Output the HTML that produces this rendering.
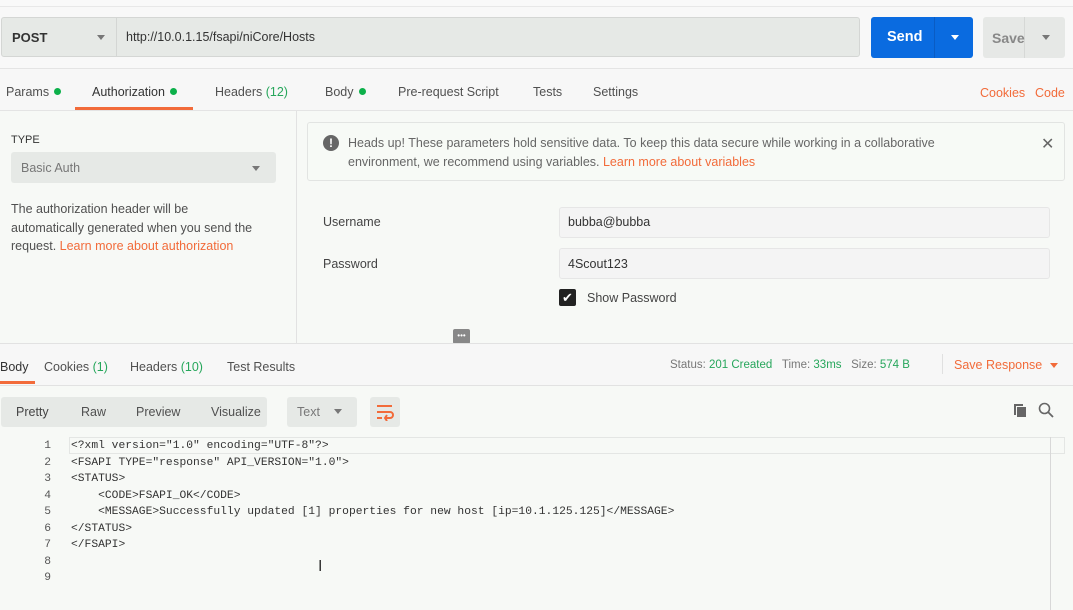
<!DOCTYPE html>
<html><head><style>
*{margin:0;padding:0;box-sizing:border-box}
body{width:1073px;height:610px;overflow:hidden;background:#f7f9f6;font-family:"Liberation Sans",sans-serif;font-size:12.5px;color:#505050;position:relative}
.a{position:absolute;white-space:nowrap}
.g{color:#26a65b}.o{color:#f26b3a}
.dot{display:inline-block;width:7px;height:7px;border-radius:50%;background:#0cb04a;margin-left:5px;vertical-align:1px}
.tri{display:block;width:0;height:0;border-left:4px solid transparent;border-right:4px solid transparent;border-top:5px solid #777}
.code{font-family:"Liberation Mono",monospace;font-size:11.3px;color:#333}
</style></head><body>
<div class="a" style="left:0;top:0;width:1073px;height:69px;background:#f8f8f8;border-top:6px solid #f9f9f9"></div>
<div class="a" style="left:0;top:6px;width:1073px;height:1px;background:#e8e8e8"></div>
<div class="a" style="left:1px;top:17px;width:859px;height:40px;background:#e6e9e6;border:1px solid #d4d6d4;border-radius:3px"></div>
<div class="a" style="left:116px;top:18px;width:1px;height:38px;background:#d4d6d4"></div>
<div class="a" style="left:12px;top:30px;font-weight:bold;color:#333;font-size:13px">POST</div>
<div class="a tri" style="left:97px;top:35px"></div>
<div class="a" style="left:126px;top:30px;color:#333;font-size:12.5px">http://10.0.1.15/fsapi/niCore/Hosts</div>
<div class="a" style="left:871px;top:17px;width:102px;height:41px;background:#0a6be0;border-radius:3px"></div>
<div class="a" style="left:934px;top:17px;width:1px;height:41px;background:#0a5cc4"></div>
<div class="a" style="left:887px;top:29px;color:#fff;font-weight:bold;font-size:14.5px">Send</div>
<div class="a tri" style="left:951px;top:35px;border-top-color:#fff"></div>
<div class="a" style="left:983px;top:17px;width:82px;height:41px;background:#e6e8e6;border-radius:3px"></div>
<div class="a" style="left:1024px;top:17px;width:1px;height:41px;background:#d6d8d6"></div>
<div class="a" style="left:992px;top:30px;color:#888;font-weight:bold;font-size:14px">Save</div>
<div class="a tri" style="left:1042px;top:35px"></div>
<div class="a" style="left:0;top:68px;width:1073px;height:1px;background:#e4e4e4"></div>
<div class="a" style="left:0;top:69px;width:1073px;height:41px;background:#f7f7f7"></div>
<div class="a" style="left:6px;top:85px">Params<span class="dot"></span></div>
<div class="a" style="left:92px;top:85px;color:#333">Authorization<span class="dot"></span></div>
<div class="a" style="left:215px;top:85px">Headers <span class="g">(12)</span></div>
<div class="a" style="left:325px;top:85px">Body<span class="dot"></span></div>
<div class="a" style="left:398px;top:85px">Pre-request Script</div>
<div class="a" style="left:533px;top:85px">Tests</div>
<div class="a" style="left:593px;top:85px">Settings</div>
<div class="a o" style="left:980px;top:86px">Cookies</div>
<div class="a o" style="left:1035px;top:86px">Code</div>
<div class="a" style="left:75px;top:107px;width:118px;height:3px;background:#f26b3a"></div>
<div class="a" style="left:0;top:110px;width:1073px;height:1px;background:#e4e4e4"></div>
<div class="a" style="left:296px;top:111px;width:1px;height:232px;background:#e2e2e2"></div>
<div class="a" style="left:11px;top:134px;font-size:11px;color:#333">TYPE</div>
<div class="a" style="left:11px;top:152px;width:265px;height:31px;background:#e6e9e6;border-radius:3px"></div>
<div class="a" style="left:21px;top:161px;color:#777">Basic Auth</div>
<div class="a tri" style="left:252px;top:166px"></div>
<div class="a" style="left:11px;top:200px;line-height:18.5px">The authorization header will be<br>automatically generated when you send the<br>request. <span class="o">Learn more about authorization</span></div>
<div class="a" style="left:307px;top:122px;width:758px;height:59px;border:1px solid #e2e4e2;border-radius:3px;background:#f7faf6"></div>
<div class="a" style="left:323px;top:135px;width:16px;height:16px;border-radius:50%;background:#666;color:#fff;font-weight:bold;font-size:12px;text-align:center;line-height:16px">!</div>
<div class="a" style="left:348px;top:134px;line-height:18.5px;color:#666">Heads up! These parameters hold sensitive data. To keep this data secure while working in a collaborative<br>environment, we recommend using variables. <span class="o">Learn more about variables</span></div>
<div class="a" style="left:1041px;top:134px;font-size:16px;color:#666">✕</div>
<div class="a" style="left:323px;top:215px;color:#444">Username</div>
<div class="a" style="left:323px;top:257px;color:#444">Password</div>
<div class="a" style="left:559px;top:207px;width:491px;height:31px;background:#f4f4f4;border:1px solid #e6e6e6;border-radius:3px"></div>
<div class="a" style="left:559px;top:248px;width:491px;height:31px;background:#f4f4f4;border:1px solid #e6e6e6;border-radius:3px"></div>
<div class="a" style="left:568px;top:215px;color:#333">bubba@bubba</div>
<div class="a" style="left:568px;top:257px;color:#333">4Scout123</div>
<div class="a" style="left:559px;top:289px;width:17px;height:17px;background:#222;border-radius:2px;color:#fff;font-size:13px;text-align:center;line-height:17px">✔</div>
<div class="a" style="left:587px;top:291px;color:#444">Show Password</div>
<div class="a" style="left:453px;top:329px;width:17px;height:15px;background:#888;border-radius:2px;color:#fff;font-size:8px;text-align:center;line-height:14px">•••</div>
<div class="a" style="left:0;top:343px;width:1073px;height:1px;background:#e2e2e2"></div>
<div class="a" style="left:0;top:344px;width:1073px;height:41px;background:#f7f7f7"></div>
<div class="a" style="left:0;top:360px;color:#333">Body</div>
<div class="a" style="left:44px;top:360px">Cookies <span class="g">(1)</span></div>
<div class="a" style="left:130px;top:360px">Headers <span class="g">(10)</span></div>
<div class="a" style="left:227px;top:360px">Test Results</div>
<div class="a" style="left:0;top:381px;width:35px;height:3px;background:#f26b3a"></div>
<div class="a" style="left:670px;top:359px;font-size:11.5px;color:#777">Status: <span class="g">201 Created</span>&nbsp;&nbsp;&nbsp;Time: <span class="g">33ms</span>&nbsp;&nbsp;&nbsp;Size: <span class="g">574 B</span></div>
<div class="a" style="left:942px;top:354px;width:1px;height:20px;background:#e0e0e0"></div>
<div class="a o" style="left:954px;top:358px">Save Response</div>
<div class="a tri" style="left:1050px;top:363px;border-top-color:#f26b3a"></div>
<div class="a" style="left:0;top:385px;width:1073px;height:1px;background:#e2e2e2"></div>
<div class="a" style="left:1px;top:397px;width:266px;height:30px;background:#e6e9e6;border-radius:3px"></div>
<div class="a" style="left:16px;top:405px;color:#444">Pretty</div>
<div class="a" style="left:81px;top:405px">Raw</div>
<div class="a" style="left:136px;top:405px">Preview</div>
<div class="a" style="left:211px;top:405px">Visualize</div>
<div class="a" style="left:287px;top:397px;width:70px;height:30px;background:#e6e9e6;border-radius:3px"></div>
<div class="a" style="left:297px;top:405px;color:#777">Text</div>
<div class="a tri" style="left:334px;top:409px"></div>
<div class="a" style="left:370px;top:397px;width:30px;height:30px;background:#e6e9e6;border-radius:3px"></div>
<svg class="a" style="left:375px;top:403px" width="20" height="18" viewBox="0 0 20 18"><path d="M2 3h15M2 9h13a3 3 0 0 1 0 6h-4M2 15h5M12 12l-2 3 2 3" stroke="#f26b3a" stroke-width="2" fill="none"/></svg>
<svg class="a" style="left:1012px;top:402px" width="16" height="16" viewBox="0 0 16 16"><path d="M2 2h9v2H4v9H2z" fill="#666"/><rect x="5" y="5" width="9" height="10" fill="#666"/></svg>
<svg class="a" style="left:1038px;top:402px" width="16" height="16" viewBox="0 0 16 16"><circle cx="6.5" cy="6.5" r="5" stroke="#666" stroke-width="1.6" fill="none"/><path d="M10 10l5 5" stroke="#666" stroke-width="1.8"/></svg>
<div class="a" style="left:69px;top:437px;width:996px;height:17px;border:1px solid #e4e6e4"></div>
<div class="a" style="left:1050px;top:437px;width:1px;height:173px;background:#d8d8d8"></div>
<div class="a code" style="left:36px;top:438px;line-height:16.5px;text-align:right;width:15px;color:#555">1<br>2<br>3<br>4<br>5<br>6<br>7<br>8<br>9</div>
<div class="a code" style="left:71px;top:438px;line-height:16.5px;white-space:pre">&lt;?xml version="1.0" encoding="UTF-8"?&gt;
&lt;FSAPI TYPE="response" API_VERSION="1.0"&gt;
&lt;STATUS&gt;
    &lt;CODE&gt;FSAPI_OK&lt;/CODE&gt;
    &lt;MESSAGE&gt;Successfully updated [1] properties for new host [ip=10.1.125.125]&lt;/MESSAGE&gt;
&lt;/STATUS&gt;
&lt;/FSAPI&gt;</div>
<div class="a" style="left:318px;top:558px;font-size:16px;color:#333">I</div>
</body></html>
